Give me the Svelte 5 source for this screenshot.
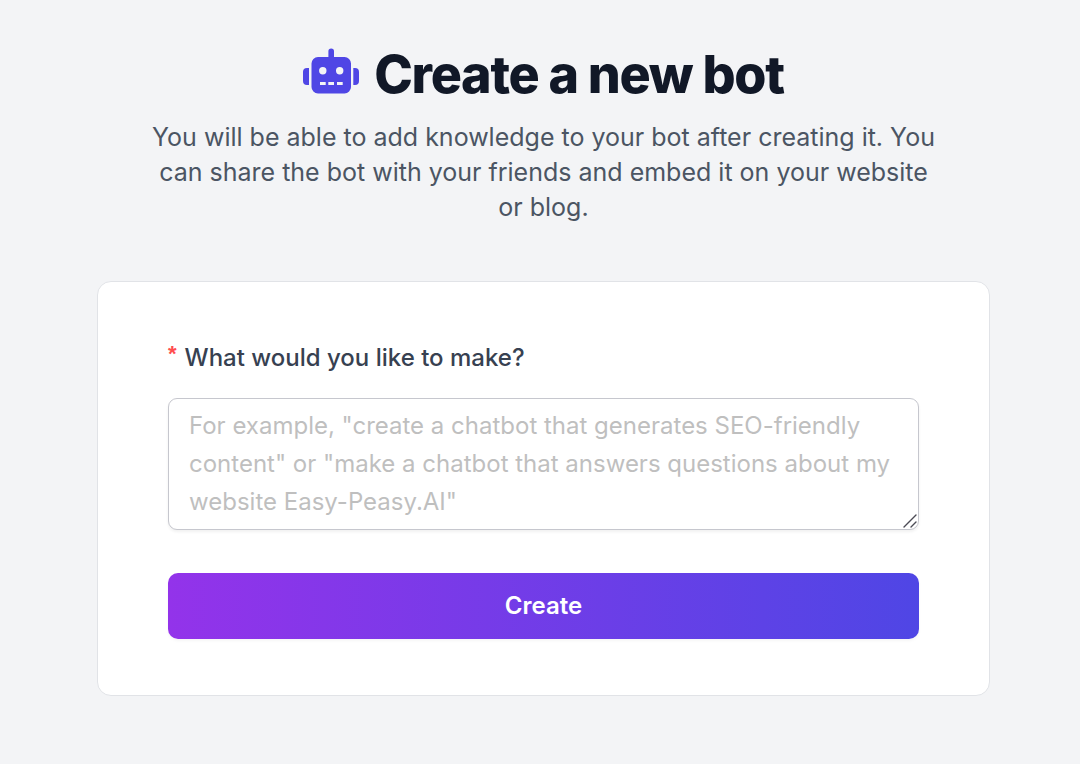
<script>
  let prompt = $state('');

  function handleSubmit(e) {
    e.preventDefault();
  }
</script>

<main class="page">
  <header class="intro">
    <h1 class="title">
      <svg class="title-icon" viewBox="0 0 56 52" fill="currentColor" aria-hidden="true">
        <path fill-rule="evenodd" d="M28.200 -.5a2.800 2.800 0 0 1 2.800 2.800V8H41.500a6.500 6.500 0 0 1 6.500 6.500V38a6.500 6.500 0 0 1-6.500 6.500H15a6.500 6.500 0 0 1-6.500-6.500V14.500A6.500 6.500 0 0 1 15 8H25.400V2.300a2.800 2.800 0 0 1 2.800-2.800ZM19.800 18a3.700 3.700 0 1 0 0 7.400a3.700 3.700 0 1 0 0-7.400ZM36.700 18a3.700 3.700 0 1 0 0 7.400a3.700 3.700 0 1 0 0-7.400ZM17 33v3h5.700v-3ZM25.300 33v3H31v-3ZM34 33v3h5.700v-3Z"/>
        <path d="M6 19v17H4a4 4 0 0 1-4-4V23a4 4 0 0 1 4-4ZM50.300 19H52a4 4 0 0 1 4 4V32a4 4 0 0 1-4 4H50.300Z"/>
      </svg>
      <span>Create a new bot</span>
    </h1>
    <p class="subtitle">
      You will be able to add knowledge to your bot after creating it. You can share the bot with your friends and embed it on your website or blog.
    </p>
  </header>

  <form class="card" onsubmit={handleSubmit}>
    <label class="label" for="prompt"><span class="required">*</span>What would you like to make?</label>
    <div class="prompt-wrap">
      <textarea
        id="prompt"
        class="prompt"
        rows="3"
        required
        bind:value={prompt}
        placeholder={'For example, "create a chatbot that generates SEO-friendly content" or "make a chatbot that answers questions about my website Easy-Peasy.AI"'}
      ></textarea>
      <svg class="grip" viewBox="0 0 14 14" fill="none" stroke="currentColor" stroke-width="1.4" stroke-linecap="round" aria-hidden="true">
        <path d="M1 13 13 1M8 13l5-5"/>
      </svg>
    </div>
    <button type="submit" class="submit">Create</button>
  </form>
</main>

<style>
  :global(body) {
    background: #f3f4f6;
  }

  .page {
    box-sizing: border-box;
    max-width: 1088px;
    margin: 0 auto;
    padding: 44px 90px 68px 97px;
    font-family: Inter, "Liberation Sans", sans-serif;
    color: #111827;
  }

  .intro {
    max-width: 790px;
    margin: 0 auto;
    text-align: center;
  }

  .title {
    display: flex;
    align-items: center;
    justify-content: center;
    gap: 15px;
    margin: 0;
    font-size: 52px;
    font-weight: 800;
    line-height: 62px;
    letter-spacing: -0.025em;
  }

  .title-icon {
    width: 56px;
    height: 52px;
    overflow: visible;
    color: #4f46e5;
  }

  .subtitle {
    margin: 14px 0 0;
    font-size: 25px;
    line-height: 35px;
    color: #4b5563;
  }

  .card {
    margin-top: 56px;
    padding: 56px 70px;
    background: #fff;
    border: 1px solid #e1e3e7;
    border-radius: 14px;
  }

  .label {
    display: block;
    font-size: 24px;
    font-weight: 500;
    line-height: 40px;
    color: #374151;
  }

  .required {
    margin-right: 8px;
    font-family: "Liberation Sans", sans-serif;
    font-size: 22px;
    font-weight: 700;
    line-height: 1;
    vertical-align: text-top;
    color: #ff4d4f;
  }

  .prompt-wrap {
    position: relative;
    margin-top: 20px;
  }

  .prompt {
    display: block;
    box-sizing: border-box;
    width: 100%;
    padding: 8px 20px;
    font: inherit;
    font-size: 24px;
    line-height: 38px;
    color: #374151;
    background: #fff;
    border: 1px solid #c6c7ce;
    border-radius: 9px;
    box-shadow: 0 2px 3px rgba(0, 0, 0, 0.06);
    resize: vertical;
  }

  .prompt::placeholder {
    color: #bfbfbf;
    opacity: 1;
  }

  .prompt::-webkit-resizer {
    background: transparent;
  }

  .grip {
    position: absolute;
    right: 2px;
    bottom: 2px;
    width: 14px;
    height: 14px;
    color: #4b4b55;
    pointer-events: none;
  }

  .submit {
    display: block;
    width: 100%;
    margin-top: 43px;
    padding: 14px;
    font: inherit;
    font-size: 24px;
    font-weight: 600;
    line-height: 38px;
    color: #fff;
    background: linear-gradient(to right, #9333ea, #4f46e5);
    border: none;
    border-radius: 10px;
    box-shadow: 0 2px 3px rgba(0, 0, 0, 0.04);
    cursor: pointer;
  }
</style>
